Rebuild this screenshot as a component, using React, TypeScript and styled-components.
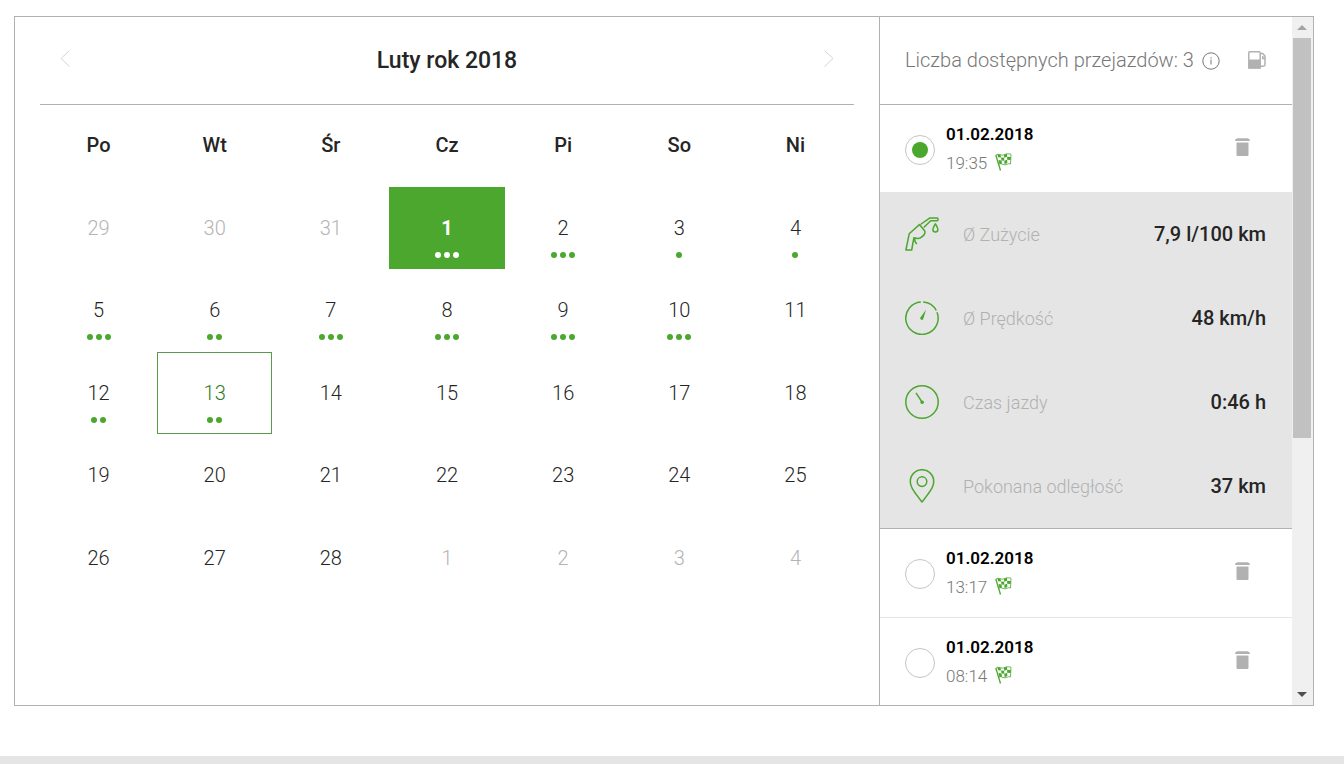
import React, { useState } from 'react';
import styled, { createGlobalStyle, css } from 'styled-components';

const green = '#4ba72e';
const line = '#b1b1b1';
const soft = '#e5e5e5';
const ink = '#252525';

const GlobalStyle = createGlobalStyle`
  *, *::before, *::after { box-sizing: border-box; }
  body {
    margin: 0;
    background: #fff;
    color: ${ink};
    font-family: Roboto, "Noto Sans", sans-serif;
    font-size: 20px;
    font-weight: 300;
  }
  button { font: inherit; color: inherit; padding: 0; border: 0; background: none; cursor: pointer; }
`;

const Page = styled.div`
  padding: 16px 30px 50px 14px;
`;

const Card = styled.main`
  display: flex;
  border: 1px solid ${line};
`;

const Calendar = styled.section`
  flex: 1;
  min-width: 0;
  padding: 0 25px;
`;

const CalendarHeader = styled.header`
  display: flex;
  align-items: center;
  justify-content: space-between;
  height: 88px;
  padding: 0 16px;
  border-bottom: 1px solid ${line};
`;

const MonthTitle = styled.h2`
  margin: 0;
  font-size: 23px;
  line-height: 28px;
  font-weight: 500;
`;

const ArrowButton = styled.button`
  display: grid;
  place-items: center;
  width: 18px;
  height: 24px;
  margin-bottom: 4px;
  color: #d4d4d4;
`;

const MonthTable = styled.table`
  width: 100%;
  table-layout: fixed;
  border-collapse: separate;
  border-spacing: 1px 0;
  th, td { padding: 0; vertical-align: top; }
  tbody tr { height: 82px; }
  tbody tr:nth-child(even) { height: 83px; }
`;

const Weekday = styled.th`
  height: 82px;
  line-height: 80px;
  font-weight: 500;
`;

type DayLook = 'normal' | 'outside' | 'selected' | 'today';

const DayButton = styled.button<{ $look: DayLook }>`
  display: flex;
  flex-direction: column;
  align-items: center;
  justify-content: flex-start;
  width: 100%;
  height: 82px;
  padding-top: 29px;
  line-height: 24px;
  color: ${ink};
  ${p => p.$look === 'outside' && css`color: #b4b4b4;`}
  ${p => p.$look === 'selected' && css`background: ${green}; color: #fff; font-weight: 700;`}
  ${p => p.$look === 'today' && css`
    padding-top: 28px;
    border: 1px solid #5a9a4a;
    color: #2f7d2c;
  `}
`;

const Dots = styled.span`
  display: flex;
  gap: 3px;
  margin-top: 12px;
`;

const Dot = styled.i<{ $light: boolean }>`
  width: 6px;
  height: 6px;
  border-radius: 50%;
  background: ${p => (p.$light ? '#fff' : green)};
`;

const Panel = styled.aside`
  display: flex;
  flex: none;
  width: 434px;
  border-left: 1px solid ${line};
`;

const PanelBody = styled.div`
  flex: 1;
  min-width: 0;
`;

const PanelHeader = styled.header`
  display: flex;
  align-items: center;
  height: 88px;
  padding: 0 26px 2px 25px;
  border-bottom: 1px solid ${line};
  color: #777;
`;

const InfoButton = styled.button`
  display: grid;
  margin: 2px auto 0 8px;
  color: #777;
`;

const IconButton = styled.button<{ $raised?: boolean }>`
  display: grid;
  margin-bottom: ${p => (p.$raised ? 4 : 0)}px;
  color: #b1b1b1;
`;

const TripList = styled.ul`
  margin: 0;
  padding: 0;
  list-style: none;
`;

const TripRow = styled.div<{ $divider: boolean }>`
  display: flex;
  align-items: center;
  padding: 14px 42px 14px 25px;
  ${p => p.$divider && css`border-bottom: 1px solid ${soft}; padding-bottom: 15px;`}
`;

const Radio = styled.input`
  display: grid;
  place-items: center;
  flex: none;
  appearance: none;
  width: 30px;
  height: 30px;
  margin: 2px 11px 0 0;
  border: 1px solid #c4c4c4;
  border-radius: 50%;
  &:checked::before {
    content: "";
    width: 16px;
    height: 16px;
    border-radius: 50%;
    background: ${green};
  }
`;

const TripLabel = styled.label`
  flex: 1;
  line-height: 29px;
  font-size: 17px;
  color: #777;
`;

const TripDate = styled.strong`
  display: block;
  line-height: 30px;
  font-weight: 600;
  color: #000;
`;

const TripTime = styled.span`
  display: flex;
  align-items: center;
  gap: 8px;
  svg { margin-bottom: 4px; }
`;

const Details = styled.dl`
  margin: 0;
  padding: 0 26px 0 25px;
  background: ${soft};
  border-bottom: 1px solid ${line};
`;

const DetailRow = styled.div`
  display: flex;
  align-items: center;
  height: 84px;
  color: ${green};
`;

const DetailName = styled.dt`
  margin-left: 24px;
  font-size: 18px;
  color: #b1b1b1;
`;

const DetailValue = styled.dd`
  margin: 0 0 0 auto;
  font-weight: 500;
  color: ${ink};
`;

const ScrollTrack = styled.div`
  display: flex;
  flex-direction: column;
  align-items: center;
  flex: none;
  width: 21px;
  padding-right: 1px;
  background: #f0f0f0;
`;

const ScrollArrow = styled.button`
  display: grid;
  place-items: center;
  width: 17px;
  height: 21px;
`;

const ScrollThumb = styled.div`
  width: 18px;
  height: 400px;
  margin-bottom: auto;
  background: #c1c1c1;
`;

const PageFooter = styled.footer`
  height: 8px;
  background: ${soft};
`;

const Chevron = ({ flip = false }: { flip?: boolean }) => (
  <svg width="12" height="18" viewBox="0 0 12 18" fill="none" stroke="currentColor">
    <path d={flip ? 'M1.5 .5 10 8.5l-8.5 8' : 'M10.500 .5 2 8.5l8.500 8'} />
  </svg>
);

const InfoIcon = () => (
  <svg width="18" height="18" viewBox="0 0 18 18" fill="none" stroke="currentColor">
    <circle cx="9" cy="9" r="8.2" />
    <path d="M9 7.500v5M9 5.200v1.200" />
  </svg>
);

const PumpIcon = () => (
  <svg width="18" height="18" viewBox="0 0 18 18" fill="none" stroke="currentColor" strokeWidth="1.500">
    <path d="M.8 17V1.800Q.8.8 1.800.8h9.400q1 0 1 1V17z" />
    <path d="M1 8.500h11V17.500H1z" fill="currentColor" stroke="none" />
    <path d="M12.500 2.500h2.200l2.300 2.600v8.400q0 1.700-1.700 1.700h-2.800M16.500 7.500h-1.700V5" />
  </svg>
);

const TrashIcon = () => (
  <svg width="15" height="18" viewBox="0 0 15 18" fill="currentColor">
    <path d="M0 3Q.3.200 3 .2h9q2.700 0 3 2.800zM1.500 4.500h12v12.500q0 1-1 1H2.500q-1 0-1-1z" />
  </svg>
);

const FlagIcon = () => (
  <svg width="17" height="18" viewBox="0 0 17 18" fill="none" stroke={green}>
    <path d="M.8 2 5.500 17.500" strokeWidth="1.300" />
    <path d="M1 2.200C3.500-.2 6 3.200 9 1.800S14 .8 16 1.200L15.500 11C13 9.500 11 13 8 11.500S5 11 3.600 11.500" strokeWidth=".8" />
    <path
      d="M2.500 1.300 5.500 1.600 6 4.500 3 4.200zM9 1.800l3-1 .1 3L9.200 4.800zM6 4.500l3.200.3.100 3-2.800-.2zM12.100 3.800 15.800 4l-.1 3-3.500-.2zM3.500 7l3 .6.500 3.200-2.500.2zM9.300 7.800l2.900-1 .1 3.200-2.800 1.300z"
      fill={green}
      stroke="none"
    />
  </svg>
);

const DetailIcon = ({ children }: { children: React.ReactNode }) => (
  <svg width="34" height="34" viewBox="0 0 34 34" fill="none" stroke="currentColor" strokeWidth="1.500" strokeLinejoin="round">
    {children}
  </svg>
);

const nozzle = (
  <DetailIcon>
    <path d="M8.900 20.700 6.700 33H.9L4.200 16.800 14.400 7.600 19.800 14c.9 2.500-.8 4.200-2.600 5.700-1.500 1.200-2.800 1.900-4.400 1.700L8.900 20.700z" />
    <path d="M9.800 21.200c-.5 2.500.2 4.200 2 5.800" />
    <path d="M15.500 7.500 24.900.9h7.300q.8 0 .8.900v1q0 .9-.8.900h-6.500L18.700 10.500" />
    <path d="M30.400 6.800c-1.500 2.700-2.500 4.200-2.500 5.700a2.500 2.500 0 0 0 5 0c0-1.500-1-3-2.500-5.700z" />
  </DetailIcon>
);

const speed = (
  <DetailIcon>
    <path d="M18.200 1A16.200 16.200 0 0 1 31.300 9.500M32 11.200A16.200 16.200 0 1 1 15.800 1" />
    <path d="M21 8.800 15.200 16.800a1.600 1.600 0 0 0 3.200.8z" fill="currentColor" stroke="none" />
  </DetailIcon>
);

const clock = (
  <DetailIcon>
    <circle cx="17" cy="17" r="16.200" />
    <path d="M11 7.800 17 17" />
    <circle cx="17.200" cy="17.300" r="1.800" fill="currentColor" stroke="none" />
  </DetailIcon>
);

const pin = (
  <DetailIcon>
    <path d="M17 33C10.800 25.200 5.300 18.500 5.300 12.400a11.700 11.700 0 0 1 23.400 0C28.700 18.500 23.200 25.200 17 33z" />
    <circle cx="17" cy="12.600" r="4.800" />
  </DetailIcon>
);

const weekdays = ['Po', 'Wt', 'Śr', 'Cz', 'Pi', 'So', 'Ni'];
const tripCounts = [3, 3, 1, 1, 3, 2, 3, 3, 3, 3, 0, 2, 2];

const weeks = Array.from({ length: 5 }, (_, week) =>
  Array.from({ length: 7 }, (_, weekday) => {
    const n = week * 7 + weekday - 2;
    if (n < 1) return { day: n + 31, outside: true, trips: 0 };
    if (n > 28) return { day: n - 28, outside: true, trips: 0 };
    return { day: n, outside: false, trips: tripCounts[n - 1] ?? 0 };
  }),
);

const trips = ['19:35', '13:17', '08:14'];

const details = [
  { icon: nozzle, name: 'Ø Zużycie', value: '7,9 l/100 km' },
  { icon: speed, name: 'Ø Prędkość', value: '48 km/h' },
  { icon: clock, name: 'Czas jazdy', value: '0:46 h' },
  { icon: pin, name: 'Pokonana odległość', value: '37 km' },
];

export default function App() {
  const [selectedDay, setSelectedDay] = useState(1);
  const [trip, setTrip] = useState(0);

  const lookOf = (day: number, outside: boolean): DayLook => {
    if (outside) return 'outside';
    if (day === selectedDay) return 'selected';
    return day === 13 ? 'today' : 'normal';
  };

  return (
    <>
      <GlobalStyle />
      <Page>
        <Card>
          <Calendar>
            <CalendarHeader>
              <ArrowButton aria-label="Poprzedni miesiąc"><Chevron /></ArrowButton>
              <MonthTitle>Luty rok 2018</MonthTitle>
              <ArrowButton aria-label="Następny miesiąc"><Chevron flip /></ArrowButton>
            </CalendarHeader>
            <MonthTable>
              <thead>
                <tr>{weekdays.map(d => <Weekday key={d} scope="col">{d}</Weekday>)}</tr>
              </thead>
              <tbody>
                {weeks.map((week, i) => (
                  <tr key={i}>
                    {week.map(({ day, outside, trips: count }) => {
                      const look = lookOf(day, outside);
                      return (
                        <td key={day}>
                          <DayButton $look={look} onClick={() => !outside && setSelectedDay(day)}>
                            {day}
                            {count > 0 && (
                              <Dots>
                                {Array.from({ length: count }, (_, k) => (
                                  <Dot key={k} $light={look === 'selected'} />
                                ))}
                              </Dots>
                            )}
                          </DayButton>
                        </td>
                      );
                    })}
                  </tr>
                ))}
              </tbody>
            </MonthTable>
          </Calendar>
          <Panel>
            <PanelBody>
              <PanelHeader>
                <span>Liczba dostępnych przejazdów: 3</span>
                <InfoButton aria-label="Informacje"><InfoIcon /></InfoButton>
                <IconButton aria-label="Tankowanie"><PumpIcon /></IconButton>
              </PanelHeader>
              <TripList>
                {trips.map((time, i) => (
                  <li key={time}>
                    <TripRow $divider={i !== trip && i < trips.length - 1}>
                      <Radio
                        type="radio"
                        name="trip"
                        id={`trip-${i}`}
                        checked={trip === i}
                        onChange={() => setTrip(i)}
                      />
                      <TripLabel htmlFor={`trip-${i}`}>
                        <TripDate>01.02.2018</TripDate>
                        <TripTime>{time}<FlagIcon /></TripTime>
                      </TripLabel>
                      <IconButton $raised aria-label="Usuń przejazd"><TrashIcon /></IconButton>
                    </TripRow>
                    {i === trip && (
                      <Details>
                        {details.map(d => (
                          <DetailRow key={d.name}>
                            {d.icon}
                            <DetailName>{d.name}</DetailName>
                            <DetailValue>{d.value}</DetailValue>
                          </DetailRow>
                        ))}
                      </Details>
                    )}
                  </li>
                ))}
              </TripList>
            </PanelBody>
            <ScrollTrack>
              <ScrollArrow aria-label="Przewiń w górę">
                <svg width="10" height="5" viewBox="0 0 10 5"><path d="M0 5 5 0l5 5z" fill="#a3a3a3" /></svg>
              </ScrollArrow>
              <ScrollThumb />
              <ScrollArrow aria-label="Przewiń w dół">
                <svg width="10" height="5" viewBox="0 0 10 5"><path d="M0 0 5 5l5-5z" fill="#505050" /></svg>
              </ScrollArrow>
            </ScrollTrack>
          </Panel>
        </Card>
      </Page>
      <PageFooter />
    </>
  );
}
